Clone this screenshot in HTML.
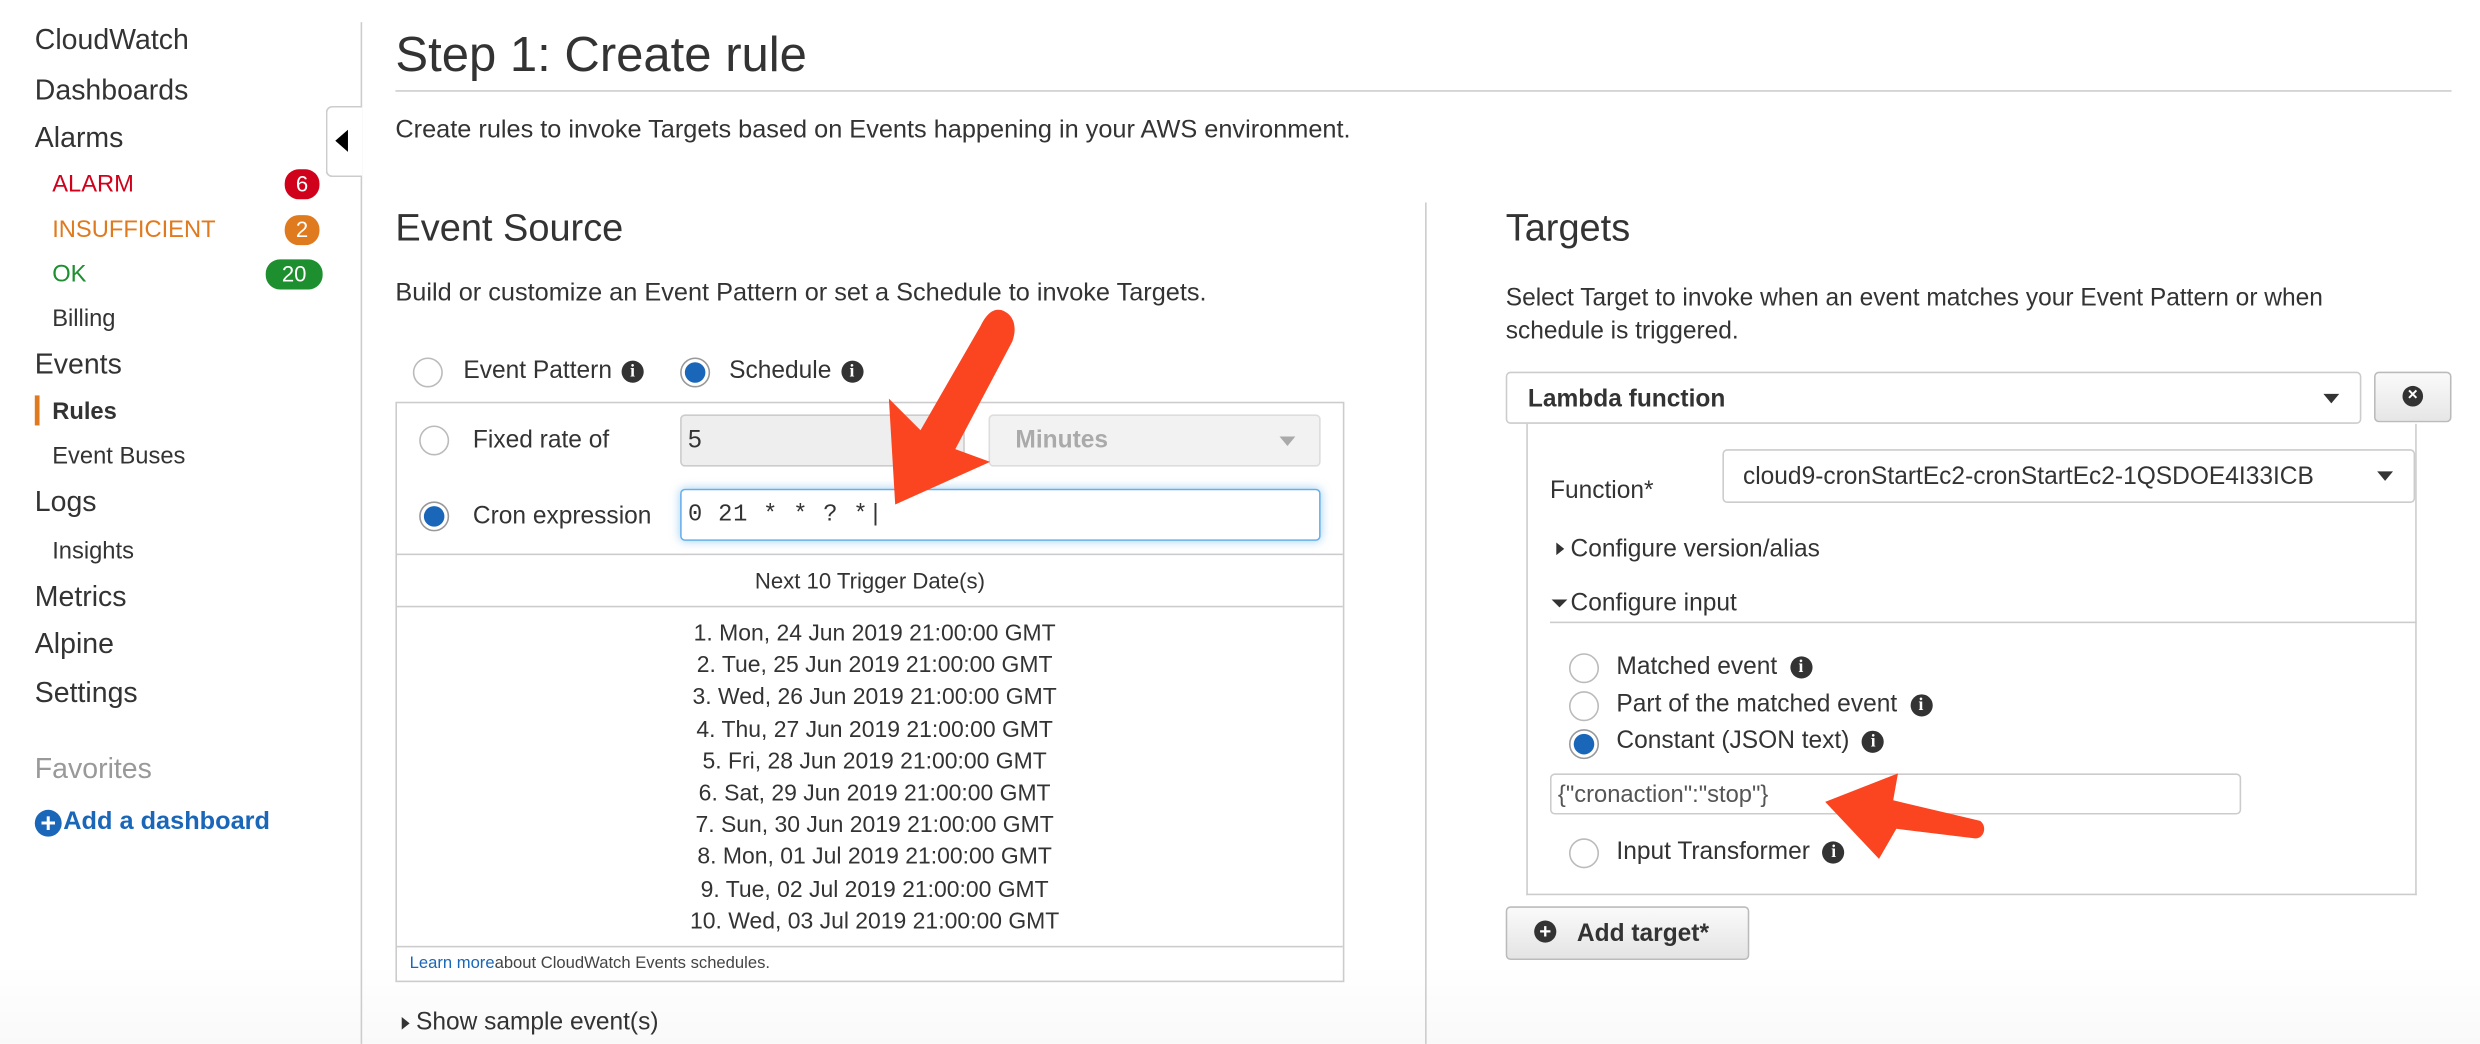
<!DOCTYPE html>
<html><head><meta charset="utf-8"><style>
html,body{margin:0;padding:0;background:#fff;overflow:hidden}
body{width:2480px;height:1044px;position:relative}
#s{position:absolute;left:0;top:0;width:1568px;height:660px;transform:scale(1.58163);transform-origin:0 0;font-family:"Liberation Sans",Arial,sans-serif;color:#333;background:linear-gradient(#fff 0,#fff 610px,#f9f9f9 660px)}
.a{position:absolute;white-space:nowrap}
.n{font-size:18px;color:#333}
.sb{font-size:15px;color:#333}
.badge{position:absolute;height:18px;border-radius:9px;color:#fff;font-size:14px;text-align:center;line-height:18px}
.radio{position:absolute;width:19px;height:19px;border:1px solid #bbb;border-radius:50%;background:#fff;box-sizing:border-box}
.radio.on{border:1px solid #999}
.radio.on:after{content:"";position:absolute;left:2px;top:2px;width:13px;height:13px;border-radius:50%;background:#1a66b8}
.info{display:inline-block;width:14px;height:14px;border-radius:50%;background:#333;color:#fff;font-size:11px;font-weight:bold;text-align:center;line-height:14px;font-family:"Liberation Serif",serif;vertical-align:1px;margin-left:6px}
.box{position:absolute;box-sizing:border-box}
.caret{position:absolute;width:0;height:0;border-left:6px solid transparent;border-right:6px solid transparent;border-top:7px solid #333}
.L{font-size:16px}
.R{font-size:15.5px}
</style></head><body><div id="s">
<!-- sidebar -->
<div class="a n" style="left:22px;top:15px">CloudWatch</div>
<div class="a n" style="left:22px;top:47px">Dashboards</div>
<div class="a n" style="left:22px;top:77px">Alarms</div>
<div class="a sb" style="left:33px;top:108px;color:#d0021b">ALARM</div>
<div class="badge" style="left:180px;top:107px;width:22px;height:19px;line-height:19px;background:#d0021b">6</div>
<div class="a sb" style="left:33px;top:137px;color:#e07a1f">INSUFFICIENT</div>
<div class="badge" style="left:180px;top:136px;width:22px;height:19px;line-height:19px;background:#e07a1f">2</div>
<div class="a sb" style="left:33px;top:165px;color:#1d8f2f">OK</div>
<div class="badge" style="left:168px;top:164px;width:36px;height:19px;line-height:19px;background:#1d8f2f">20</div>
<div class="a sb" style="left:33px;top:193px">Billing</div>
<div class="a n" style="left:22px;top:220px">Events</div>
<div style="position:absolute;left:22px;top:250px;width:3px;height:19px;background:#e07a1f"></div>
<div class="a sb" style="left:33px;top:252px;font-weight:bold">Rules</div>
<div class="a sb" style="left:33px;top:280px">Event Buses</div>
<div class="a n" style="left:22px;top:307px">Logs</div>
<div class="a sb" style="left:33px;top:340px">Insights</div>
<div class="a n" style="left:22px;top:367px">Metrics</div>
<div class="a n" style="left:22px;top:397px">Alpine</div>
<div class="a n" style="left:22px;top:428px">Settings</div>
<div class="a n" style="left:22px;top:476px;color:#999">Favorites</div>
<div class="a" style="left:22px;top:511px;font-size:16px;font-weight:bold;color:#1a66b8"><span style="display:inline-block;width:17px;height:17px;border-radius:50%;background:#1a66b8;color:#fff;text-align:center;line-height:17px;font-size:17px;vertical-align:-2px;margin-right:1px">+</span>Add a dashboard</div>
<div style="position:absolute;left:228px;top:14px;width:1px;height:646px;background:#ccc"></div>
<div class="box" style="left:206px;top:67px;width:23px;height:45px;border:1px solid #ccc;border-right:none;border-radius:4px 0 0 4px;background:#fff"></div>
<div style="position:absolute;left:212px;top:82px;border-top:7px solid transparent;border-bottom:7px solid transparent;border-right:8px solid #000"></div>
<!-- main -->
<div class="a" style="left:250px;top:17px;font-size:31px;color:#333">Step 1: Create rule</div>
<div style="position:absolute;left:250px;top:57px;width:1300px;height:1px;background:#ccc"></div>
<div class="a L" style="left:250px;top:74px">Create rules to invoke Targets based on Events happening in your AWS environment.</div>
<div class="a" style="left:250px;top:131px;font-size:24px">Event Source</div>
<div class="a L" style="left:250px;top:177px">Build or customize an Event Pattern or set a Schedule to invoke Targets.</div>
<div class="radio" style="left:261px;top:226px"></div>
<div class="a R" style="left:293px;top:226px">Event Pattern<span class="info">i</span></div>
<div class="radio on" style="left:430px;top:226px"></div>
<div class="a R" style="left:461px;top:226px">Schedule<span class="info">i</span></div>
<div class="box" style="left:250px;top:254px;width:600px;height:367px;border:1px solid #ccc"></div>
<div class="radio" style="left:265px;top:269px"></div>
<div class="a R" style="left:299px;top:270px">Fixed rate of</div>
<div class="box" style="left:430px;top:262px;width:180px;height:33px;border:1px solid #ccc;border-radius:3px;background:#eee;font-size:15.5px;padding:7px 4px">5</div>
<div class="box" style="left:625px;top:262px;width:210px;height:33px;border:1px solid #ddd;border-radius:3px;background:#f2f2f2;font-size:15.5px;font-weight:bold;color:#aaa;padding:7px 16px">Minutes</div>
<div class="caret" style="left:809px;top:276px;border-top-color:#aaa;border-width:6px 5px 0"></div>
<div class="radio on" style="left:265px;top:317px"></div>
<div class="a R" style="left:299px;top:318px">Cron expression</div>
<div class="box" style="left:430px;top:309px;width:405px;height:33px;border:1px solid #66afe9;border-radius:3px;box-shadow:0 0 6px rgba(102,175,233,.6);font-family:'Liberation Mono',monospace;font-size:15px;padding:7px 4px;letter-spacing:0.5px">0 21 * * ? *|</div>
<div style="position:absolute;left:251px;top:350px;width:598px;height:1px;background:#ccc"></div>
<div class="a" style="left:251px;top:359px;width:598px;text-align:center;font-size:14px">Next 10 Trigger Date(s)</div>
<div style="position:absolute;left:251px;top:383px;width:598px;height:1px;background:#ccc"></div>
<div class="a" style="left:251px;top:391px;width:604px;text-align:center;font-size:14.5px;line-height:20.2px">1. Mon, 24 Jun 2019 21:00:00 GMT<br>2. Tue, 25 Jun 2019 21:00:00 GMT<br>3. Wed, 26 Jun 2019 21:00:00 GMT<br>4. Thu, 27 Jun 2019 21:00:00 GMT<br>5. Fri, 28 Jun 2019 21:00:00 GMT<br>6. Sat, 29 Jun 2019 21:00:00 GMT<br>7. Sun, 30 Jun 2019 21:00:00 GMT<br>8. Mon, 01 Jul 2019 21:00:00 GMT<br>9. Tue, 02 Jul 2019 21:00:00 GMT<br>10. Wed, 03 Jul 2019 21:00:00 GMT</div>
<div style="position:absolute;left:251px;top:598px;width:598px;height:1px;background:#ccc"></div>
<div class="a" style="left:259px;top:603px;font-size:10.5px;color:#444"><span style="color:#1a66b8">Learn more</span>about CloudWatch Events schedules.</div>
<div style="position:absolute;left:254px;top:643px;border-top:4px solid transparent;border-bottom:4px solid transparent;border-left:5px solid #333"></div>
<div class="a R" style="left:263px;top:638px">Show sample event(s)</div>
<div style="position:absolute;left:901px;top:128px;width:1px;height:532px;background:#ccc"></div>
<!-- targets -->
<div class="a" style="left:952px;top:131px;font-size:24px">Targets</div>
<div class="a R" style="left:952px;top:178px;line-height:21px">Select Target to invoke when an event matches your Event Pattern or when<br>schedule is triggered.</div>
<div class="box" style="left:952px;top:235px;width:541px;height:33px;border:1px solid #ccc;border-radius:3px;font-size:15.5px;font-weight:bold;padding:8px 13px">Lambda function</div>
<div class="caret" style="left:1469px;top:249px;border-width:6px 5px 0"></div>
<div class="box" style="left:1501px;top:235px;width:49px;height:32px;border:1px solid #bbb;border-radius:3px;background:linear-gradient(#fafafa,#e6e6e6)"></div>
<div style="position:absolute;left:1519px;top:244px;width:13px;height:13px;border-radius:50%;background:#333;color:#fff;font-size:11px;line-height:13px;text-align:center;font-weight:bold">×</div>
<div class="box" style="left:965px;top:268px;width:563px;height:298px;border:1px solid #ccc;border-top:none"></div>
<div class="a R" style="left:980px;top:302px">Function*</div>
<div class="box" style="left:1089px;top:284px;width:438px;height:34px;border:1px solid #ccc;border-radius:3px;font-size:15.5px;padding:8px 12px">cloud9-cronStartEc2-cronStartEc2-1QSDOE4I33ICB</div>
<div class="caret" style="left:1503px;top:298px;border-width:6px 5px 0"></div>
<div style="position:absolute;left:984px;top:343px;border-top:4px solid transparent;border-bottom:4px solid transparent;border-left:5px solid #333"></div>
<div class="a R" style="left:993px;top:339px">Configure version/alias</div>
<div style="position:absolute;left:981px;top:379px;border-left:5px solid transparent;border-right:5px solid transparent;border-top:5px solid #333"></div>
<div class="a R" style="left:993px;top:373px">Configure input</div>
<div style="position:absolute;left:980px;top:393px;width:548px;height:1px;background:#ccc"></div>
<div class="radio" style="left:992px;top:413px"></div>
<div class="a R" style="left:1022px;top:413px">Matched event<span class="info" style="margin-left:8px">i</span></div>
<div class="radio" style="left:992px;top:437px"></div>
<div class="a R" style="left:1022px;top:437px">Part of the matched event<span class="info" style="margin-left:8px">i</span></div>
<div class="radio on" style="left:992px;top:461px"></div>
<div class="a R" style="left:1022px;top:460px">Constant (JSON text)<span class="info" style="margin-left:8px">i</span></div>
<div class="box" style="left:980px;top:489px;width:437px;height:26px;border:1px solid #ccc;border-radius:3px;font-size:15px;color:#555;padding:4px 4px">{"cronaction":"stop"}</div>
<div class="radio" style="left:992px;top:530px"></div>
<div class="a R" style="left:1022px;top:530px">Input Transformer<span class="info" style="margin-left:8px">i</span></div>
<div class="box" style="left:952px;top:573px;width:154px;height:34px;border:1px solid #bbb;border-radius:3px;background:linear-gradient(#fafafa,#e4e4e4);font-size:15.5px;font-weight:bold;padding:8px 0 0 44px">Add target*</div>
<div style="position:absolute;left:970px;top:582px;width:14px;height:14px;border-radius:50%;background:#333;color:#fff;font-size:13px;line-height:14px;text-align:center;font-weight:bold">+</div>
<!-- arrows -->
<svg style="position:absolute;left:0;top:0" width="1568" height="660">
<path d="M633 196 C642 199 643 208 640 216 L604 284 L626 292 L566 319 L562 252 L582 272 L620 206 C624 198 628 195 633 196 Z" fill="#fb4420"/>
<path d="M1252 519 C1257 523 1254 531 1248 530 L1199 524 L1188 543 L1154 507 L1200 489 L1197 506 Z" fill="#fb4420"/>
</svg>
</div></body></html>
